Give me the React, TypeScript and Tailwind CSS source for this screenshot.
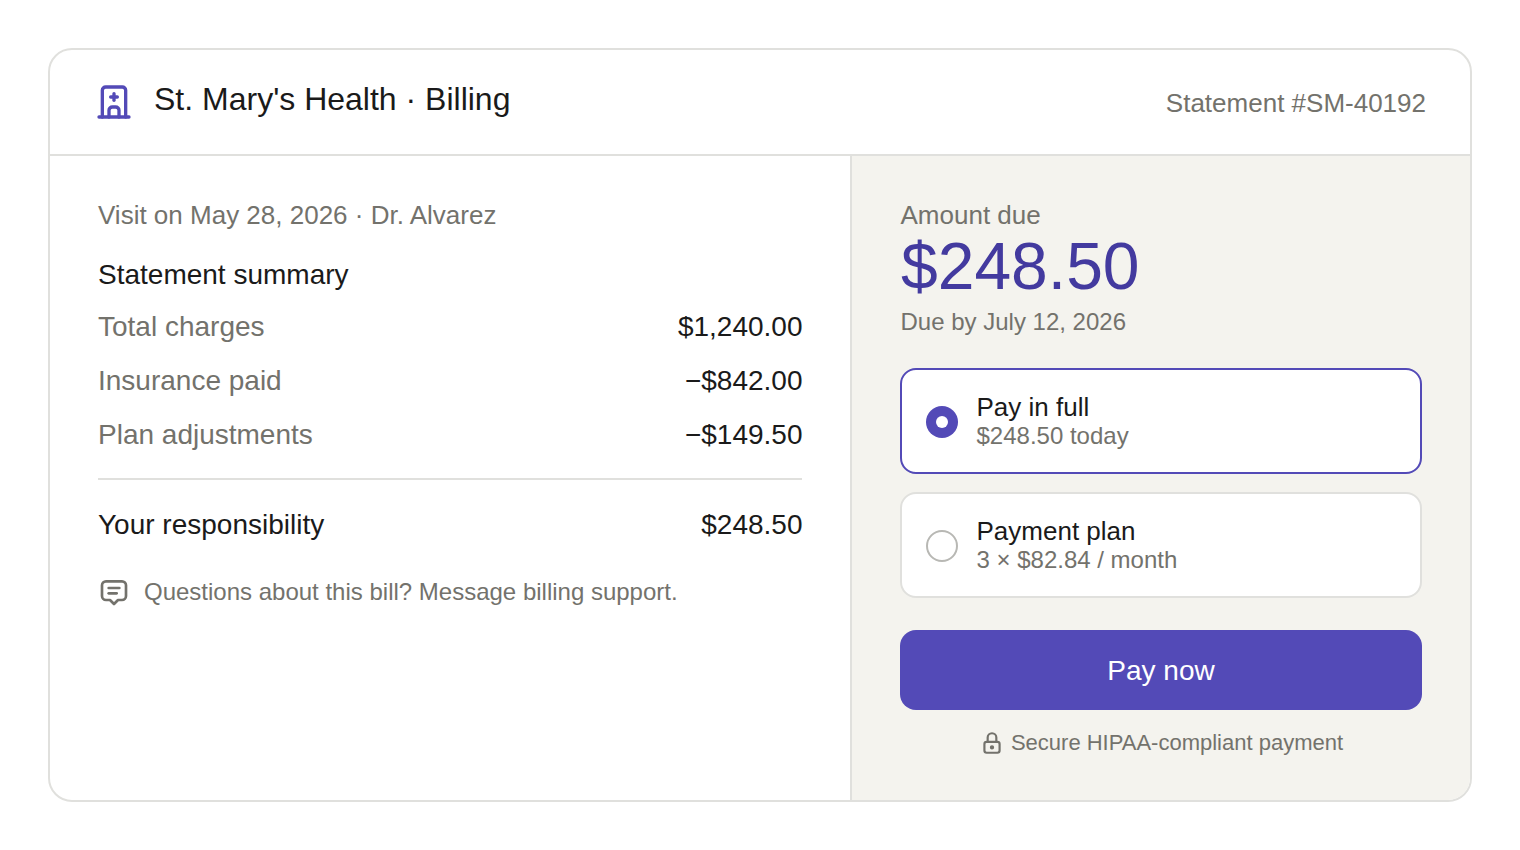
import React from 'react'

const iconProps = {
  fill: 'none',
  viewBox: '0 0 24 24',
  stroke: 'currentColor',
  strokeWidth: 2,
  strokeLinecap: 'round' as const,
  strokeLinejoin: 'round' as const,
}

const rows = [
  { label: 'Total charges', value: '$1,240.00' },
  { label: 'Insurance paid', value: '−$842.00' },
  { label: 'Plan adjustments', value: '−$149.50' },
]

export default function App() {
  return (
    <div className="min-h-[850px] bg-white p-12 font-['Liberation_Sans',Arial,sans-serif] text-[#1a1a1a]">
      <div className="h-[754px] flex flex-col border-2 border-[#e0e0dd] rounded-3xl overflow-hidden bg-white">
        <header className="h-[106px] shrink-0 flex items-center justify-between pl-11 pr-11 border-b-2 border-[#e0e0dd]">
          <div className="flex items-center gap-[20px]">
            <svg className="w-10 h-10 text-[#534ab7]" {...iconProps}>
              <path d="M3 21h18" />
              <path d="M5 21v-16a2 2 0 0 1 2 -2h10a2 2 0 0 1 2 2v16" />
              <path d="M9 21v-4a2 2 0 0 1 2 -2h2a2 2 0 0 1 2 2v4" />
              <path d="M10 9h4" />
              <path d="M12 7v4" />
            </svg>
            <h1 className="text-[32px] leading-[40px] font-normal -mt-[6px]">St. Mary's Health · Billing</h1>
          </div>
          <span className="text-[26px] text-[#73726c] mt-[2px]">Statement #SM-40192</span>
        </header>

        <div className="flex-1 flex">
          <section className="w-[802px] shrink-0 border-r-2 border-[#e0e0dd] pl-12 pr-12 pt-[44px]">
            <p className="text-[26px] leading-[30px] text-[#73726c]">Visit on May 28, 2026 · Dr. Alvarez</p>
            <h2 className="mt-[29px] text-[28px] leading-[32px] font-normal">Statement summary</h2>
            <div className="mt-[9px]">
              {rows.map(row => (
                <div key={row.label} className="h-[54px] flex items-center justify-between text-[28px]">
                  <span className="text-[#73726c]">{row.label}</span>
                  <span className="-mr-[0.5px]">{row.value}</span>
                </div>
              ))}
            </div>
            <div className="mt-4 pt-[18px] border-t-2 border-[#e0e0dd] flex items-center justify-between text-[28px] leading-[54px]">
              <span>Your responsibility</span>
              <span className="-mr-[0.5px]">$248.50</span>
            </div>
            <div className="mt-[22px] flex items-center gap-[14px] text-[24px] text-[#73726c]">
              <svg className="w-8 h-8" {...iconProps}>
                <path d="M8 9h8" />
                <path d="M8 13h6" />
                <path d="M9 18h-3a3 3 0 0 1 -3 -3v-8a3 3 0 0 1 3 -3h12a3 3 0 0 1 3 3v8a3 3 0 0 1 -3 3h-3l-3 3l-3 -3z" />
              </svg>
              <span>Questions about this bill? Message billing support.</span>
            </div>
          </section>

          <aside className="flex-1 bg-[#f4f3ee] pl-12 pr-12 pt-[44px]">
            <p className="text-[26px] leading-[30px] text-[#73726c] pl-[0.5px]">Amount due</p>
            <p className="text-[66px] leading-[72px] text-[#433a9f] pl-[1px]">$248.50</p>
            <p className="text-[24px] leading-[30px] text-[#73726c] mt-[5px] pl-[0.5px]">Due by July 12, 2026</p>

            <div className="mt-[31px] h-[106px] flex items-center gap-[18.5px] px-6 bg-white border-2 border-[#534ab7] rounded-2xl">
              <span className="w-8 h-8 mt-[2px] rounded-full bg-[#534ab7] flex items-center justify-center">
                <span className="w-3 h-3 rounded-full bg-white" />
              </span>
              <div>
                <div className="text-[26px] leading-[30px]">Pay in full</div>
                <div className="text-[24px] leading-[28px] text-[#73726c]">$248.50 today</div>
              </div>
            </div>

            <div className="mt-[18px] h-[106px] flex items-center gap-[18.5px] px-6 bg-white border-2 border-[#e0e0dd] rounded-2xl">
              <span className="w-8 h-8 mt-[2px] rounded-full border-2 border-[#b8b8b4] bg-white" />
              <div>
                <div className="text-[26px] leading-[30px]">Payment plan</div>
                <div className="text-[24px] leading-[28px] text-[#73726c]">3 × $82.84 / month</div>
              </div>
            </div>

            <button className="mt-8 w-full h-20 pt-[2px] rounded-2xl bg-[#534ab7] text-white text-[28px]">Pay now</button>

            <div className="mt-[18px] flex items-center justify-center gap-[6px] text-[22px] leading-[30px] text-[#73726c]">
              <svg className="w-[26px] h-[26px]" {...iconProps}>
                <path d="M5 13a2 2 0 0 1 2 -2h10a2 2 0 0 1 2 2v6a2 2 0 0 1 -2 2h-10a2 2 0 0 1 -2 -2v-6z" />
                <path d="M11 16a1 1 0 1 0 2 0a1 1 0 0 0 -2 0" />
                <path d="M8 11v-4a4 4 0 1 1 8 0v4" />
              </svg>
              <span>Secure HIPAA-compliant payment</span>
            </div>
          </aside>
        </div>
      </div>
    </div>
  )
}
